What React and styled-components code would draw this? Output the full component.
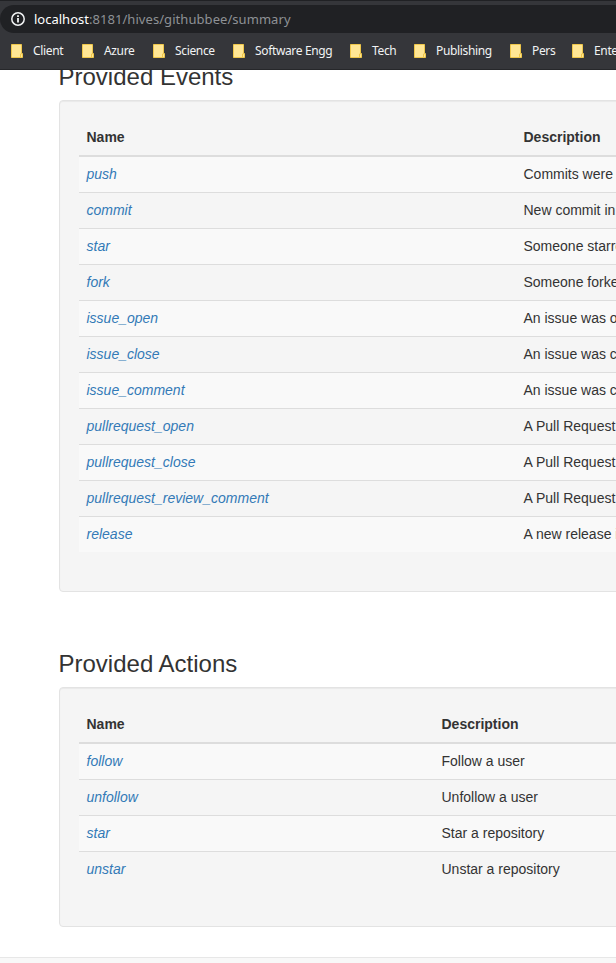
import React from "react";
import styled, { createGlobalStyle } from "styled-components";

const GlobalStyle = createGlobalStyle`
  * { box-sizing: border-box; }
  body {
    margin: 0;
    background: #fff;
    overflow: hidden;
    color: #333;
    font: 14px/20px "Liberation Sans", Arial, sans-serif;
  }
`;

const Page = styled.div`
  display: flex;
  flex-direction: column;
  width: 616px;
  height: 963px;
  overflow: hidden;
`;

const BrowserChrome = styled.header`
  flex: none;
  height: 70px;
  padding-top: 4px;
  background: #35363a;
  border-top: 1px solid #202124;
  border-bottom: 1px solid #26272a;
  font-family: "Noto Sans", sans-serif;
  overflow: hidden;
`;

const AddressBar = styled.div`
  display: flex;
  align-items: center;
  height: 28px;
  padding-left: 11px;
  gap: 9px;
  background: #202124;
  border-radius: 14px 0 0 14px;
`;

const Url = styled.span`
  color: #8e9195;
  font-size: 13px;
  line-height: 28px;
  letter-spacing: 0.06px;
  white-space: nowrap;
`;

const Host = styled.span`
  color: #fff;
  letter-spacing: 0;
`;

const Bookmarks = styled.nav`
  display: flex;
  height: 36px;
  padding-left: 11px;
`;

const Bookmark = styled.div`
  flex: none;
  display: flex;
  align-items: center;
  gap: 10px;
  width: ${(p) => p.$width}px;
  color: #f1f3f4;
  font-size: 12px;
  letter-spacing: -0.35px;
  white-space: nowrap;
`;

const Content = styled.main`
  display: flow-root;
  flex: none;
  height: 887px;
  padding-left: 59px;
`;

const Section = styled.section`
  margin-top: ${(p) => p.$offset}px;
`;

const Heading = styled.h3`
  margin: 0 0 10px -0.5px;
  font-size: 24px;
  line-height: 26px;
  font-weight: 400;
`;

const Well = styled.div`
  width: 800px;
  padding: 19px 19px 39px;
  background: #f5f5f5;
  border: 1px solid #e3e3e3;
  border-radius: 4px;
  box-shadow: inset 0 1px 1px rgba(0, 0, 0, 0.05);
`;

const Row = styled.div`
  display: grid;
  grid-template-columns: ${(p) => p.$name}px 1fr;
  height: 36px;
  padding: 7px 8px 8px 7.5px;
  border-top: 1px solid #ddd;
  white-space: nowrap;

  &:nth-child(even) {
    background: #f9f9f9;
  }
  &:nth-child(2) {
    height: 35px;
    border-top: 0;
  }
`;

const HeaderRow = styled(Row)`
  height: 37px;
  border-top: 0;
  border-bottom: 2px solid #ddd;
  font-weight: 700;
`;

const EventName = styled.em`
  color: #337ab7;
`;

const Footer = styled.footer`
  flex: none;
  height: 6px;
  background: #f8f8f8;
  border-top: 1px solid #e7e7e7;
`;

const InfoIcon = () => (
  <svg width="14" height="14" viewBox="0 0 14 14" fill="none">
    <circle cx="7" cy="7" r="6.2" stroke="#f1f3f4" strokeWidth="1.5" />
    <path d="M7 6v4.5M7 3.3V5" stroke="#f1f3f4" strokeWidth="1.8" />
  </svg>
);

const FolderIcon = () => (
  <svg width="12" height="14" viewBox="0 0 12 14">
    <path d="M.5.5h10v9h1v4H.5z" fill="#ffe694" stroke="#efc74a" />
    <path d="M9.5 13v-3h1" fill="none" stroke="#efc74a" />
  </svg>
);

const bookmarks = [
  { label: "Client", width: 71 },
  { label: "Azure", width: 71 },
  { label: "Science", width: 80 },
  { label: "Software Engg", width: 117 },
  { label: "Tech", width: 64 },
  { label: "Publishing", width: 96 },
  { label: "Pers", width: 62 },
  { label: "Enterprise", width: 90 },
];

const events = [
  ["push", "Commits were pushed"],
  ["commit", "New commit in repository"],
  ["star", "Someone starred a repository"],
  ["fork", "Someone forked a repository"],
  ["issue_open", "An issue was opened"],
  ["issue_close", "An issue was closed"],
  ["issue_comment", "An issue was commented on"],
  ["pullrequest_open", "A Pull Request was opened"],
  ["pullrequest_close", "A Pull Request was closed"],
  ["pullrequest_review_comment", "A Pull Request was commented on"],
  ["release", "A new release is published"],
];

const actions = [
  ["follow", "Follow a user"],
  ["unfollow", "Unfollow a user"],
  ["star", "Star a repository"],
  ["unstar", "Unstar a repository"],
];

const DefinitionTable = ({ title, rows, nameWidth, offset }) => (
  <Section $offset={offset}>
    <Heading>{title}</Heading>
    <Well>
      <HeaderRow $name={nameWidth}>
        <span>Name</span>
        <span>Description</span>
      </HeaderRow>
      {rows.map(([name, description]) => (
        <Row key={name} $name={nameWidth}>
          <EventName>{name}</EventName>
          <span>{description}</span>
        </Row>
      ))}
    </Well>
  </Section>
);

// The page is scrolled so that the first heading is partly under the toolbar.
const Scroller = styled.div`
  flex: none;
  height: 893px;
  overflow: hidden;
`;

export default function App() {
  return (
    <Page>
      <GlobalStyle />
      <BrowserChrome>
        <AddressBar>
          <InfoIcon />
          <Url><Host>localhost</Host>:8181/hives/githubbee/summary</Url>
        </AddressBar>
        <Bookmarks>
          {bookmarks.map((b) => (
            <Bookmark key={b.label} $width={b.width}>
              <FolderIcon />
              <span>{b.label}</span>
            </Bookmark>
          ))}
        </Bookmarks>
      </BrowserChrome>
      <Scroller>
        <Content>
          <DefinitionTable title="Provided Events" rows={events} nameWidth={437} offset={-6} />
          <DefinitionTable title="Provided Actions" rows={actions} nameWidth={355} offset={59} />
        </Content>
        <Footer />
      </Scroller>
    </Page>
  );
}
